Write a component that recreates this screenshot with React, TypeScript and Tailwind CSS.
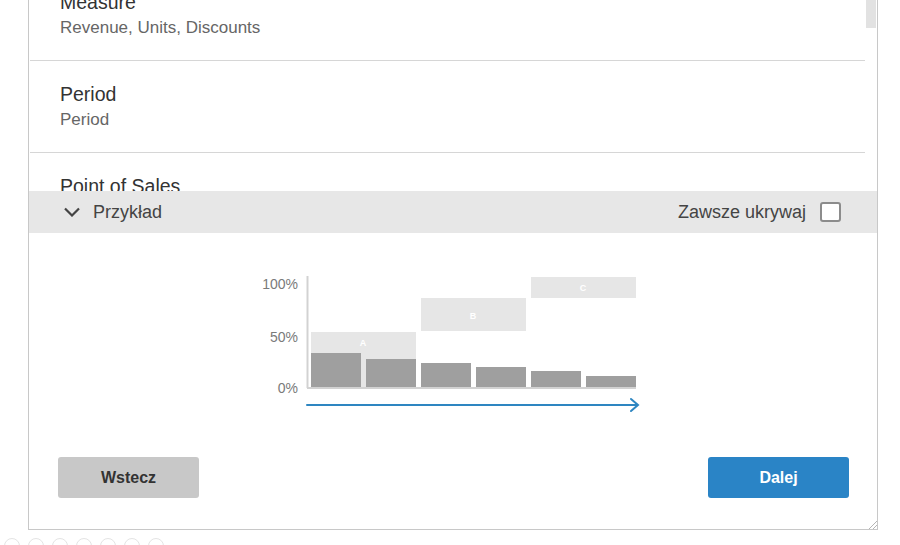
const items = [
  { title: "Measure", sub: "Revenue, Units, Discounts" },
  { title: "Period", sub: "Period" },
  { title: "Point of Sales", sub: "Point of Sales" },
];

const bars = [
  { x: 61, h: 34 },
  { x: 116, h: 28 },
  { x: 171, h: 24 },
  { x: 226, h: 20 },
  { x: 281, h: 16 },
  { x: 336, h: 11 },
];

const ExampleChart = () => (
  <svg width="400" height="155" viewBox="0 0 400 155" className="ml-[221px] mt-[32px] block">
    <g fill="#e6e6e6">
      <rect x="61" y="67" width="105" height="56" />
      <rect x="171" y="33" width="105" height="33" />
      <rect x="281" y="12" width="105" height="21" />
    </g>
    <g fill="#ffffff" fontSize="9" fontWeight="700" fontFamily="'Liberation Sans', Arial, sans-serif" textAnchor="middle">
      <text x="113" y="81">A</text>
      <text x="223" y="54">B</text>
      <text x="333" y="26">C</text>
    </g>
    {bars.map((b) => (
      <rect key={b.x} x={b.x} y={122 - b.h} width="50" height={b.h} fill="#9f9f9f" />
    ))}
    <g stroke="#d2d2d2" strokeWidth="2" fill="none">
      <line x1="57.5" y1="11" x2="57.5" y2="123" />
      <line x1="57" y1="123" x2="386" y2="123" />
    </g>
    <g fill="#7a7a7a" fontSize="14" fontFamily="'Liberation Sans', Arial, sans-serif" textAnchor="end">
      <text x="48" y="24">100%</text>
      <text x="48" y="77">50%</text>
      <text x="48" y="128">0%</text>
    </g>
    <g stroke="#2e86c1" strokeWidth="2" fill="none" strokeLinecap="round">
      <line x1="57" y1="140" x2="387" y2="140" />
      <polyline points="381,134 388,140 381,146" />
    </g>
  </svg>
);

export default function App() {
  return (
    <div className="w-[900px] h-[545px] overflow-hidden bg-white font-['Liberation_Sans',Arial,sans-serif]">
      <div className="relative ml-[28px] w-[850px] h-[530px] border-x border-b border-[#c8c8c8] flex flex-col">
        {/* scrolling list */}
        <div className="flex h-[191px] overflow-hidden">
          <div className="flex-1 ml-[1px] -mt-[31px]">
            {items.map((it) => (
              <div key={it.title} className="border-b border-[#d6d6d6] pl-[30px] pt-[22px] pb-[22px]">
                <div className="text-[19.5px] leading-[22px] text-[#333]">{it.title}</div>
                <div className="mt-[5px] text-[17px] leading-[20px] text-[#666]">{it.sub}</div>
              </div>
            ))}
          </div>
          <div className="w-[11px] ml-[1px]">
            <div className="w-[10px] h-[28px] bg-[#e2e2e2]" />
          </div>
        </div>

        {/* example header */}
        <div className="h-[42px] bg-[#e7e7e7] flex items-center justify-between pl-[35px] pr-[36px]">
          <div className="flex items-center gap-[13px] text-[18px] text-[#444]">
            <svg width="16" height="10" viewBox="0 0 16 10" fill="none" stroke="#444" strokeWidth="2.2">
              <polyline points="1,1.5 8,8.5 15,1.5" />
            </svg>
            <span>Przykład</span>
          </div>
          <div className="flex items-center gap-[14px] text-[18px] text-[#444]">
            <span>Zawsze ukrywaj</span>
            <div className="w-[21px] h-[20px] border-2 border-[#8c8c8c] rounded-[3px] bg-white" />
          </div>
        </div>

        <ExampleChart />

        {/* buttons */}
        <div className="mt-[37px] flex justify-between pl-[29px] pr-[28px]">
          <button className="w-[141px] h-[41px] rounded-[3px] bg-[#c8c8c8] text-[16px] font-bold text-[#333]">
            Wstecz
          </button>
          <button className="w-[141px] h-[41px] rounded-[3px] bg-[#2a84c6] text-[16px] font-bold text-white">
            Dalej
          </button>
        </div>

        {/* resize grip */}
        <svg width="8" height="8" viewBox="0 0 8 8" className="absolute right-0 bottom-0" stroke="#b5b5b5" strokeWidth="1">
          <line x1="0" y1="8" x2="8" y2="0" />
          <line x1="4" y1="8" x2="8" y2="4" />
        </svg>
      </div>

      {/* page dots */}
      <div className="flex gap-[8px] ml-[4px] mt-[8px]">
        {[0, 1, 2, 3, 4, 5, 6].map((i) => (
          <div key={i} className="w-[16px] h-[16px] rounded-full border border-[#e4e4e4]" />
        ))}
      </div>
    </div>
  );
}
